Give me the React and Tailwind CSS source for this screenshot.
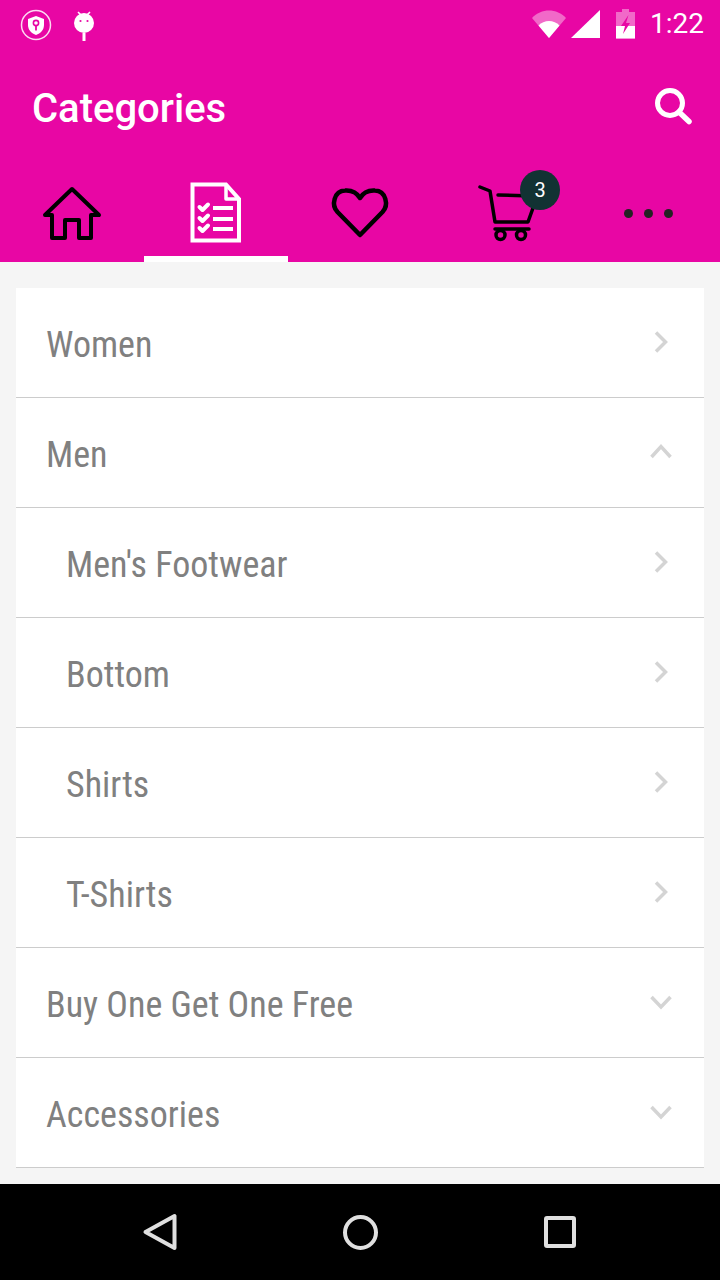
import React from 'react';

const PINK = 'bg-[#e806a4]';

const rows = [
  { name: 'Women', icon: 'right' },
  { name: 'Men', icon: 'up' },
  { name: "Men's Footwear", icon: 'right', sub: true },
  { name: 'Bottom', icon: 'right', sub: true },
  { name: 'Shirts', icon: 'right', sub: true },
  { name: 'T-Shirts', icon: 'right', sub: true },
  { name: 'Buy One Get One Free', icon: 'down' },
  { name: 'Accessories', icon: 'down' },
];

const chevrons = {
  right: 'M7 2.5 L16.5 12 L7 21.5',
  up: 'M2.5 17 L12 6.5 L21.5 17',
  down: 'M2.5 7 L12 17 L21.5 7',
};

const StatusBar = () => (
  <div className="h-12 flex items-center justify-between">
    <div className="flex items-center pl-[19px] gap-[18px]">
      <svg width="34" height="34" viewBox="0 0 34 34" className="mt-[2px]">
        <circle cx="17" cy="17" r="14.5" fill="none" stroke="#fff" strokeOpacity="0.85" strokeWidth="1.5" />
        <path d="M17 8 L25 11 V17 C25 22 21.5 25.5 17 27 C12.5 25.5 9 22 9 17 V11 Z" fill="#fff" />
        <circle cx="17" cy="15" r="2.6" fill="none" stroke="#e806a4" strokeWidth="1.6" />
        <path d="M17 17.5 V22.5" stroke="#e806a4" strokeWidth="1.8" />
      </svg>
      <svg width="26" height="34" viewBox="0 0 26 34" className="mt-[2px]">
        <path d="M7 4 L10 7 M19 4 L16 7" stroke="#fff" strokeWidth="1.6" />
        <circle cx="13" cy="15" r="10" fill="#fff" />
        <circle cx="9.5" cy="13" r="1.1" fill="#e806a4" />
        <circle cx="16.5" cy="13" r="1.1" fill="#e806a4" />
        <rect x="11.5" y="25" width="3" height="8" fill="#fff" />
      </svg>
    </div>
    <div className="flex items-center pr-4">
      <svg width="36" height="30" viewBox="0 0 36 30">
        <path d="M1 9 C10 -1 26 -1 35 9 L18 29 Z" fill="#fff" fillOpacity="0.4" />
        <path d="M7.5 16.5 C13 10.5 23 10.5 28.5 16.5 L18 29 Z" fill="#fff" />
      </svg>
      <svg width="30" height="30" viewBox="0 0 30 30" className="ml-[3px]">
        <path d="M1 29 L30 1 V29 Z" fill="#fff" />
      </svg>
      <svg width="20" height="30" viewBox="0 0 20 30" className="ml-4">
        <path d="M6 0 H13 V3 H19 V29.5 H0 V3 H6 Z" fill="#fff" fillOpacity="0.4" />
        <path d="M0 17 H19 V29.5 H0 Z" fill="#fff" />
        <path d="M12.5 6 L5 17 H9 L7 25 L14 14 H10 Z" fill="#e806a4" />
      </svg>
      <span className="ml-[14px] text-white text-[28px] leading-none font-['Roboto',sans-serif]">1:22</span>
    </div>
  </div>
);

const TabIcon = ({ children }) => (
  <svg width="64" height="64" viewBox="0 0 64 64" fill="none" strokeLinecap="round" strokeLinejoin="round">
    {children}
  </svg>
);

const Tabs = () => (
  <div className="flex h-24">
    <div className="w-36 flex items-center justify-center pb-[2px]">
      <TabIcon>
        <path d="M5 34 L32 8 L59 34 H51 V57 H39 V39 H25 V57 H12 V34 Z" stroke="#000" strokeWidth="4" />
      </TabIcon>
    </div>
    <div className="w-36 flex items-center justify-center pb-[2px] relative">
      <TabIcon>
        <path d="M8.5 3.5 H42 L55 18 V59.5 H8.5 Z" stroke="#fff" strokeWidth="4" strokeLinejoin="miter" />
        <path d="M42 4 V18 H55" stroke="#fff" strokeWidth="3.5" strokeLinecap="butt" />
        <path d="M15.5 26 L18.5 29 L24 23.5 M15.5 37 L18.5 40 L24 34.5 M15.5 47 L18.5 50 L24 44.5" stroke="#fff" strokeWidth="4" />
        <path d="M29 27 H49 M29 38 H49 M29 48 H49" stroke="#fff" strokeWidth="4" strokeLinecap="butt" />
      </TabIcon>
      <div className="absolute left-0 right-0 bottom-0 h-[6px] bg-white" />
    </div>
    <div className="w-36 flex items-center justify-center pb-[2px]">
      <TabIcon>
        <path d="M32 54 L9.5 31 C3 24 6 10 17 9.5 C24 9 29 12 32 17 C35 12 40 9 47 9.5 C58 10 61 24 54.5 31 Z" stroke="#000" strokeWidth="4.5" />
      </TabIcon>
    </div>
    <div className="w-36 flex items-center justify-center pb-[2px] relative">
      <TabIcon>
        <path d="M8 6 L18 10 L23 41 H56 L61 27 M26 14 L60 15 M23 48 H57" stroke="#000" strokeWidth="3.5" />
        <circle cx="28.5" cy="54" r="4.5" stroke="#000" strokeWidth="3.5" />
        <circle cx="49" cy="54" r="4.5" stroke="#000" strokeWidth="3.5" />
      </TabIcon>
      <div className="absolute left-[88px] top-1 w-10 h-10 rounded-full bg-[#123233] text-white text-xl flex items-center justify-center font-['Roboto',sans-serif]">
        3
      </div>
    </div>
    <div className="w-36 flex items-center justify-center pb-[2px] gap-[11px]">
      <div className="w-[9px] h-[9px] rounded-full bg-[#222]" />
      <div className="w-[9px] h-[9px] rounded-full bg-[#222]" />
      <div className="w-[9px] h-[9px] rounded-full bg-[#222]" />
    </div>
  </div>
);

const App = () => {
  return (
    <div className="w-[720px] h-[1280px] flex flex-col bg-[#f5f5f5] overflow-hidden">
      <div className={PINK}>
        <StatusBar />
        <div className="h-[118px] flex items-center justify-between pl-8 pr-7">
          <span className="text-white text-[40px] font-medium leading-none font-['Roboto',sans-serif] mt-[4px]">Categories</span>
          <svg width="38" height="38" viewBox="0 0 38 38" fill="none" className="mt-[-2px]">
            <circle cx="16" cy="16" r="12.5" stroke="#fff" strokeWidth="5" />
            <path d="M25 25 L35 34.5" stroke="#fff" strokeWidth="5.5" strokeLinecap="round" />
          </svg>
        </div>
        <Tabs />
      </div>

      <div className="flex-1 min-h-0 pt-[26px] px-4">
        <div className="bg-white">
          {rows.map((row) => (
            <div
              key={row.name}
              className={`h-[110px] border-b border-[#ccc] flex items-center justify-between pr-[31px] ${row.sub ? 'pl-[50px]' : 'pl-[30px]'}`}
            >
              <span className="text-[36px] leading-none text-[#808080] font-['Roboto',sans-serif] [font-stretch:75%] mt-[4px]">
                {row.name}
              </span>
              <svg width="24" height="24" viewBox="0 0 24 24" fill="none" className="mb-[1px]">
                <path d={chevrons[row.icon]} stroke="#d4d4d4" strokeWidth="3.5" />
              </svg>
            </div>
          ))}
        </div>
      </div>

      <div className="h-24 bg-black flex items-center justify-center">
        <div className="w-[200px] flex justify-center">
          <svg width="40" height="40" viewBox="0 0 40 40" fill="none">
            <path d="M5.5 20 L34.5 4 V36 Z" stroke="#e0e0e0" strokeWidth="4" strokeLinejoin="round" />
          </svg>
        </div>
        <div className="w-[200px] flex justify-center">
          <div className="w-[35px] h-[35px] rounded-full border-4 border-[#e0e0e0]" />
        </div>
        <div className="w-[200px] flex justify-center">
          <div className="w-8 h-8 rounded-[3px] border-4 border-[#e0e0e0]" />
        </div>
      </div>
    </div>
  );
};

export default App;
